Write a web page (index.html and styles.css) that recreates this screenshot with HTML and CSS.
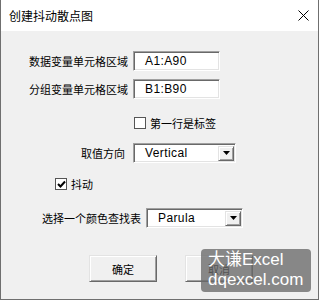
FILE: index.html
```html
<!DOCTYPE html>
<html lang="zh-CN">
<head>
    <meta charset="UTF-8">
    <link rel="stylesheet" href="styles.css">
    <title>创建抖动散点图</title>
</head>
<body>
<div class="dialog">
    <div class="titlebar">
        <span class="title">创建抖动散点图</span>
        <svg class="close" width="11" height="11" viewBox="0 0 11 11">
            <path d="M0.5 0.5 L10.5 10.5 M10.5 0.5 L0.5 10.5" stroke="#000" stroke-width="1" fill="none"/>
        </svg>
    </div>
    <div class="content">
        <div class="row row-data">
            <span class="label">数据变量单元格区域</span>
            <div class="field">A1:A90</div>
        </div>
        <div class="row row-group">
            <span class="label">分组变量单元格区域</span>
            <div class="field">B1:B90</div>
        </div>
        <div class="row row-header">
            <span class="checkbox"></span>
            <span class="label">第一行是标签</span>
        </div>
        <div class="row row-direction">
            <span class="label">取值方向</span>
            <div class="select select-direction">
                <span>Vertical</span>
                <span class="drop"><svg width="7" height="4" viewBox="0 0 7 4"><path d="M0 0 H7 L3.5 4 Z" fill="#000"/></svg></span>
            </div>
        </div>
        <div class="row row-jitter">
            <span class="checkbox checked">
                <svg width="9" height="9" viewBox="0 0 9 9"><path d="M1 4 L3.5 6.5 L8 1.5" stroke="#000" stroke-width="2" fill="none"/></svg>
            </span>
            <span class="label">抖动</span>
        </div>
        <div class="row row-color">
            <span class="label">选择一个颜色查找表</span>
            <div class="select select-color">
                <span>Parula</span>
                <span class="drop"><svg width="7" height="4" viewBox="0 0 7 4"><path d="M0 0 H7 L3.5 4 Z" fill="#000"/></svg></span>
            </div>
        </div>
        <div class="row row-buttons">
            <button class="btn">确定</button>
            <button class="btn">取消</button>
        </div>
    </div>
    <div class="watermark">大谦Excel<br>dqexcel.com</div>
</div>
</body>
</html>
```

FILE: styles.css
```css
body {
    margin: 0;
    font-family: "Noto Sans CJK SC", "Liberation Sans", sans-serif;
    font-size: 11px;
    color: #000;
}

.dialog {
    position: relative;
    width: 319px;
    height: 300px;
    box-sizing: border-box;
    background-color: #f0f0f0;
    border: 1px solid #6f6f6f;
    border-top: none;
}

.titlebar {
    height: 31px;
    background-color: #fff;
    display: flex;
    align-items: center;
    justify-content: space-between;
    padding: 0 9px 0 8px;
}

.title {
    font-size: 12px;
    line-height: 14px;
}

.row {
    display: flex;
    align-items: center;
}

.label {
    line-height: 14px;
    white-space: nowrap;
}

.row-data {
    margin-top: 20px;
    padding-left: 28px;
    gap: 5px;
}

.row-group {
    margin-top: 8px;
    padding-left: 28px;
    gap: 5px;
}

.row-header {
    margin-top: 17px;
    height: 14px;
    padding-left: 133px;
    gap: 4px;
}

.row-direction {
    margin-top: 13px;
    padding-left: 80px;
    gap: 8px;
}

.row-jitter {
    margin-top: 14px;
    height: 14px;
    padding-left: 54px;
    gap: 4px;
}

.row-color {
    margin-top: 17px;
    padding-left: 41px;
    gap: 5px;
}

.row-buttons {
    margin-top: 27px;
    padding-left: 88px;
    gap: 28px;
}

.field,
.select {
    height: 20px;
    box-sizing: border-box;
    background-color: #fff;
    border: 1px solid;
    border-color: #a0a0a0 #fff #fff #a0a0a0;
    box-shadow: inset 1px 1px #696969, inset -1px -1px #e3e3e3;
    font-family: "Liberation Sans", sans-serif;
    font-size: 12px;
    letter-spacing: 0.4px;
    line-height: 18px;
}

.field {
    width: 87px;
    padding-left: 11px;
}

.select {
    display: flex;
    align-items: center;
    justify-content: space-between;
    padding: 0 1px 0 11px;
}

.select-direction {
    width: 103px;
}

.select-color {
    width: 97px;
}

.drop {
    width: 16px;
    height: 15px;
    box-sizing: border-box;
    background-color: #f0f0f0;
    border: 1px solid;
    border-color: #e3e3e3 #696969 #696969 #e3e3e3;
    box-shadow: inset 1px 1px #fff, inset -1px -1px #a0a0a0;
    display: flex;
    align-items: center;
    justify-content: center;
}

.checkbox {
    width: 12px;
    height: 12px;
    box-sizing: border-box;
    background-color: #fff;
    border: 1px solid #555;
    display: flex;
    align-items: center;
    justify-content: center;
}

.btn {
    width: 68px;
    height: 27px;
    box-sizing: border-box;
    background-color: #f0f0f0;
    border: 1px solid;
    border-color: #e3e3e3 #696969 #696969 #e3e3e3;
    box-shadow: inset 1px 1px #fff, inset -1px -1px #a0a0a0;
    font-family: "Noto Sans CJK SC", sans-serif;
    font-size: 11px;
    padding: 0;
}

.watermark {
    position: absolute;
    left: 200px;
    top: 249px;
    width: 110px;
    height: 43px;
    box-sizing: border-box;
    padding: 1px 0 0 7px;
    border-radius: 4px;
    background-color: rgba(105, 105, 105, 0.78);
    color: #fff;
    font-family: "Liberation Sans", "Noto Sans CJK SC", sans-serif;
    font-size: 17px;
    line-height: 20px;
}
```
